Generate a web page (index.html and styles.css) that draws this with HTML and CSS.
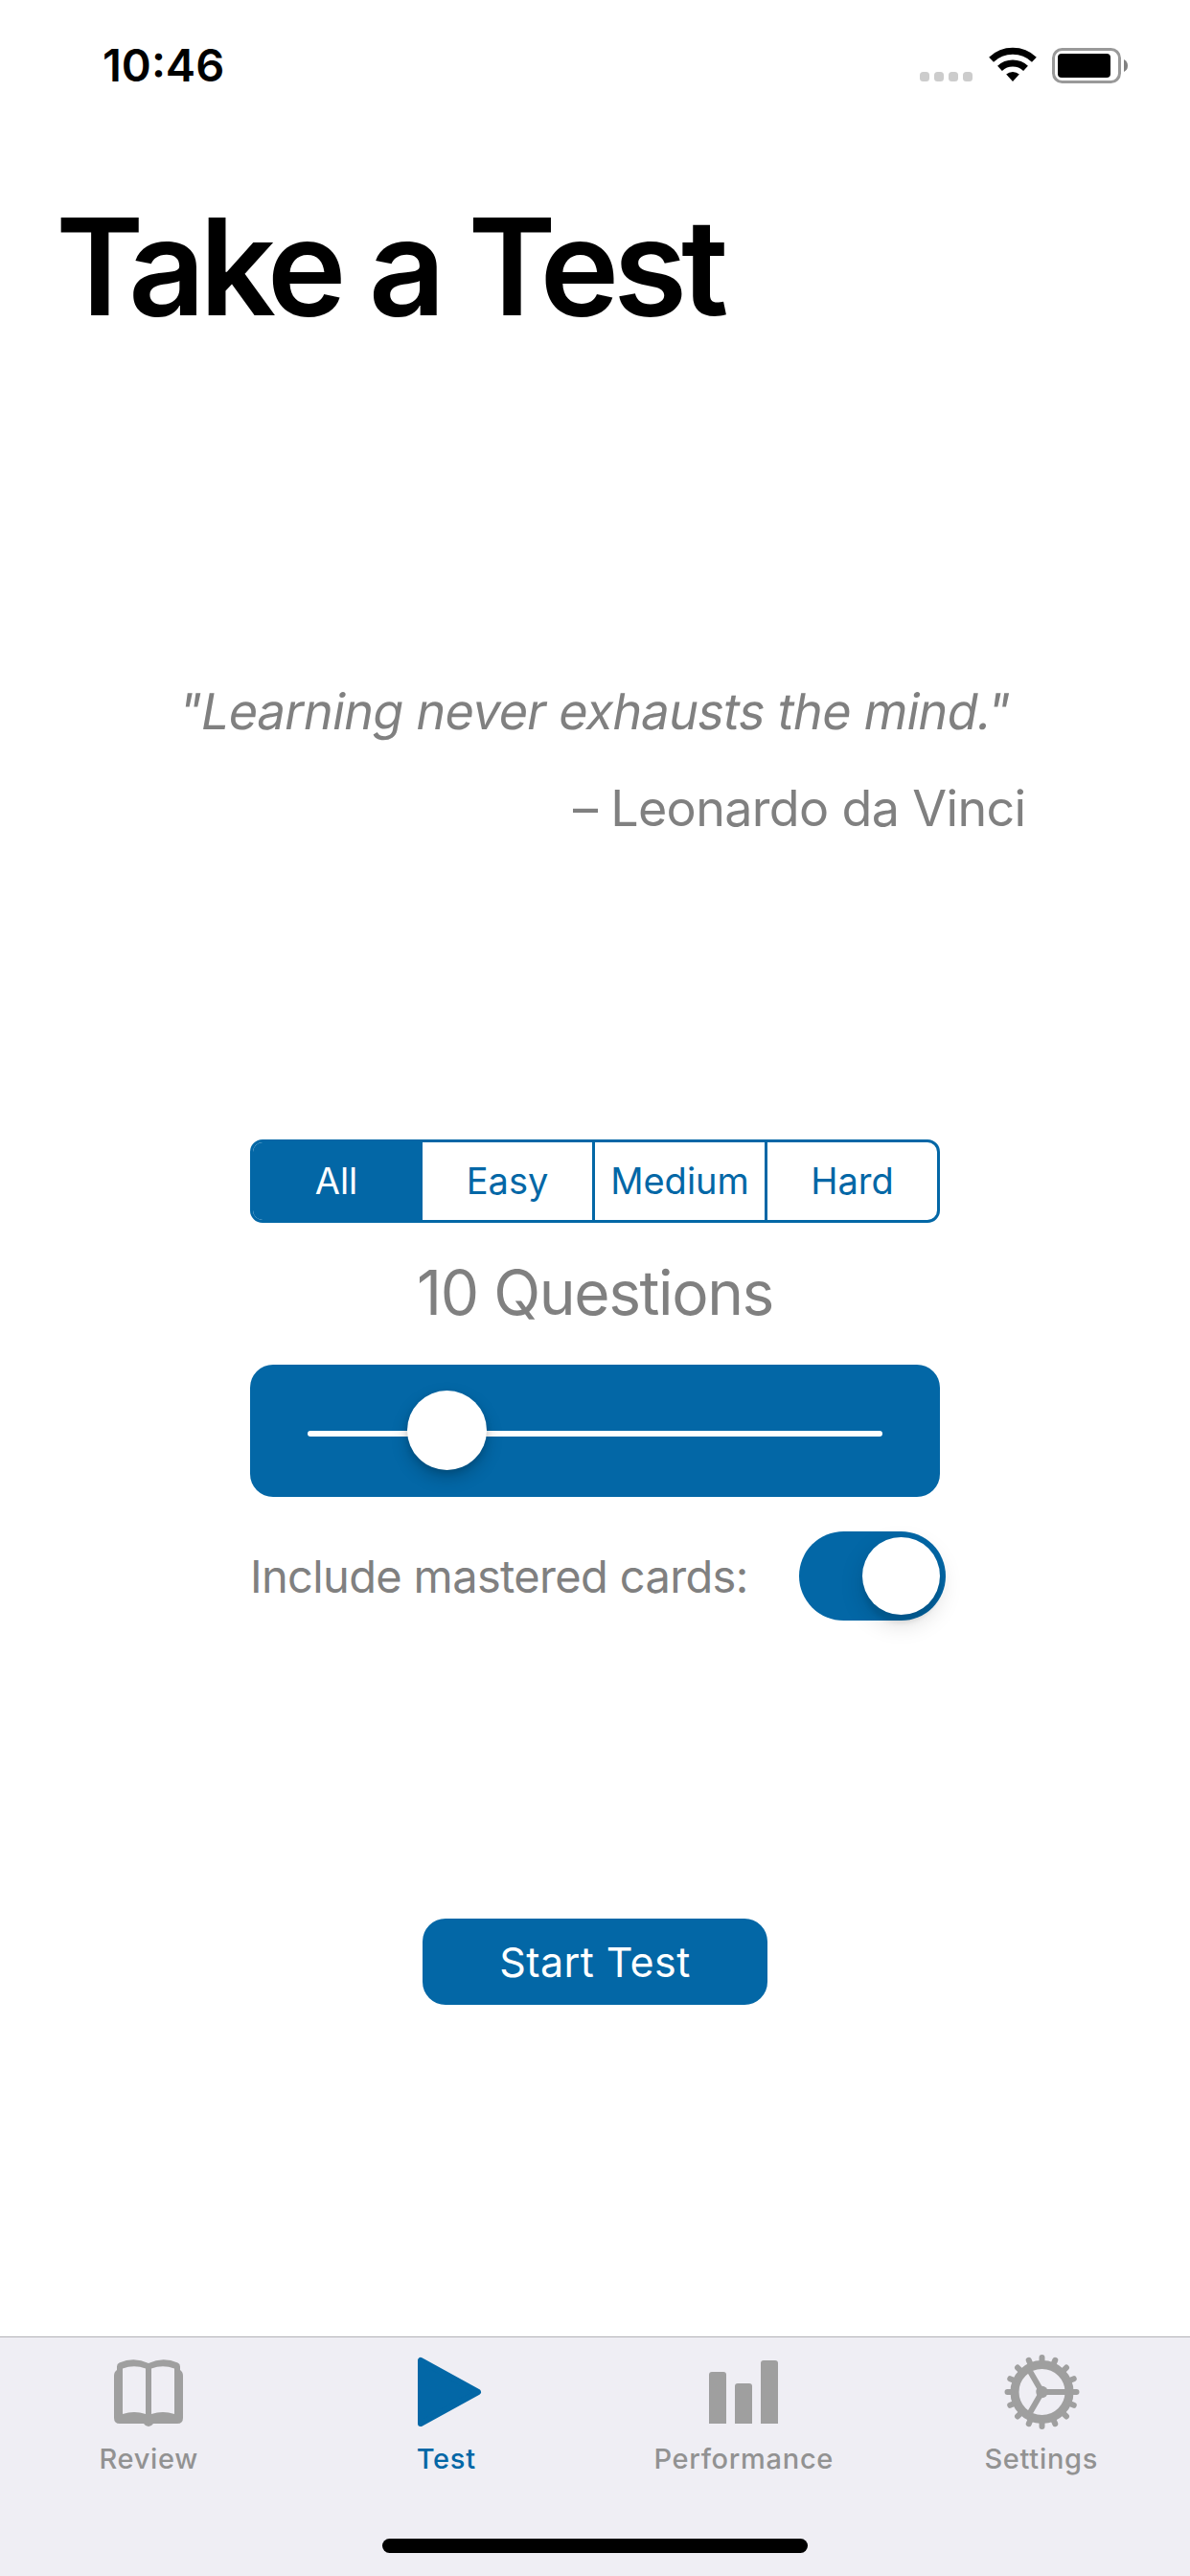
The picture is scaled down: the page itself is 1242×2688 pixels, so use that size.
FILE: index.html
```html
<!DOCTYPE html>
<html lang="en">
<head>
<meta charset="utf-8">
<title>Take a Test</title>
<link rel="stylesheet" href="styles.css">
</head>
<body>
<div class="screen">
  <header class="status-bar">
    <span class="time">10:46</span>
    <div class="status-icons">
      <span class="signal"><i></i><i></i><i></i><i></i></span>
      <svg class="wifi" viewBox="0 0 50 36" width="50" height="36">
        <g fill="none" stroke="#000">
          <path d="M2.6 13.2 A32.5 32.5 0 0 1 47.4 13.2" stroke-width="7"/>
          <path d="M11.5 22.4 A19.6 19.6 0 0 1 38.5 22.4" stroke-width="7"/>
        </g>
        <path d="M18.2 28.6 A10 10 0 0 1 31.8 28.6 L25 36 Z"/>
      </svg>
      <svg class="battery" viewBox="0 0 80 37" width="80" height="37">
        <rect x="1.5" y="1.5" width="69" height="34" rx="9" fill="#fff" stroke="#999" stroke-width="3"/>
        <rect x="6" y="6" width="55" height="25" rx="4"/>
        <path d="M75 12 Q79 14 79 18.500 Q79 23 75 25 Z" fill="#808080"/>
      </svg>
    </div>
  </header>

  <h1 class="title">Take a Test</h1>

  <main class="content">
    <blockquote class="quote">
      <p class="quote-text">"Learning never exhausts the mind."</p>
      <p class="quote-author">– Leonardo da Vinci</p>
    </blockquote>

    <section class="options">
      <div class="segments">
        <span class="segment selected">All</span>
        <span class="segment">Easy</span>
        <span class="segment">Medium</span>
        <span class="segment">Hard</span>
      </div>
      <p class="count">10 Questions</p>
      <div class="slider">
        <div class="track"><span class="thumb"></span></div>
      </div>
      <div class="toggle-row">
        <span class="toggle-label">Include mastered cards:</span>
        <span class="switch"><span class="knob"></span></span>
      </div>
    </section>

    <button class="start" type="button"><span>Start Test</span></button>
  </main>

  <nav class="tabs">
    <a class="tab">
      <svg viewBox="0 0 80 80" width="80" height="80" fill="#9f9f9f">
        <path fill-rule="evenodd" d="M7 16.500 Q7 13.500 9.500 12.500 Q25 6 40 13 Q55 6 70.500 12.500 Q73 13.500 73 16.500 V20 Q76 22 76 26 V70 Q76 76 70 76 H45 Q43 79 40 79 Q37 79 35 76 H10 Q4 76 4 70 V26 Q4 22 7 20 Z M13 18.500 V66 Q25 62 37 66 V18.500 Q25 14 13 18.500 Z M43 18.500 V66 Q55 62 67 66 V18.500 Q55 14 43 18.500 Z"/>
      </svg>
      <span class="tab-label">Review</span>
    </a>
    <a class="tab active">
      <svg viewBox="0 0 80 80" width="80" height="80">
        <path d="M13 10 V76 L73 43 Z" fill="#0367a6" stroke="#0367a6" stroke-width="6" stroke-linejoin="round"/>
      </svg>
      <span class="tab-label">Test</span>
    </a>
    <a class="tab">
      <svg viewBox="0 0 80 80" width="80" height="80" fill="#9f9f9f">
        <path d="M4 76 V25 Q4 22 7 22 H19 Q22 22 22 25 V76 Z"/>
        <path d="M31 76 V37 Q31 34 34 34 H46 Q49 34 49 37 V76 Z"/>
        <path d="M58 76 V13 Q58 10 61 10 H73 Q76 10 76 13 V76 Z"/>
      </svg>
      <span class="tab-label">Performance</span>
    </a>
    <a class="tab">
      <svg viewBox="0 0 80 80" width="80" height="80">
        <g fill="none" stroke="#9f9f9f" transform="translate(40.500 43)">
          <circle r="28.500" stroke-width="9"/>
          <path stroke-width="6" stroke-linecap="round" d="M32 0H36M29.560 12.250L33.260 13.780M22.630 22.630L25.460 25.460M12.250 29.560L13.780 33.260M0 32V36M-12.250 29.560L-13.780 33.260M-22.630 22.630L-25.460 25.460M-29.560 12.250L-33.260 13.780M-32 0H-36M-29.560 -12.250L-33.260 -13.780M-22.630 -22.630L-25.460 -25.460M-12.250 -29.560L-13.780 -33.260M0 -32V-36M12.250 -29.560L13.780 -33.260M22.630 -22.630L25.460 -25.460M29.560 -12.250L33.260 -13.780"/>
          <path stroke-width="6" d="M0 0H26M0 0L-13 22.500M0 0L-13 -22.500"/>
          <circle r="6.200" fill="#9f9f9f" stroke="none"/>
        </g>
      </svg>
      <span class="tab-label">Settings</span>
    </a>
  </nav>
  <div class="home-area"><span class="home-indicator"></span></div>
</div>
</body>
</html>
```
FILE: styles.css
```css
* {
  box-sizing: border-box;
}

body,
h1,
p,
blockquote {
  margin: 0;
}

body {
  background: #fff;
  font-family: Inter, "Liberation Sans", sans-serif;
}

.screen {
  display: flex;
  flex-direction: column;
  width: 1242px;
  height: 2688px;
}

.status-bar {
  display: flex;
  align-items: center;
  justify-content: space-between;
  height: 136px;
  padding: 0 64px 0 107px;
}

.time {
  font-size: 47px;
  font-weight: 600;
  line-height: 60px;
}

.status-icons {
  display: flex;
  align-items: center;
}

.signal {
  display: flex;
  gap: 5px;
  margin: 24px 17px 0 0;
}

.signal i {
  width: 10px;
  height: 10px;
  border-radius: 3.500px;
  background: #ccc;
}

.wifi {
  margin: 0 16px 2px 0;
}

.title {
  margin-top: 58px;
  padding-left: 58px;
  font-size: 140px;
  font-weight: 600;
  letter-spacing: -6.1px;
  line-height: 168px;
  white-space: nowrap;
}

.content {
  display: flex;
  flex: 1;
  flex-direction: column;
  align-items: center;
}

.quote {
  width: 899px;
  margin-top: 341px;
  color: #808080;
  font-size: 52px;
  letter-spacing: -0.65px;
  line-height: 80px;
  white-space: nowrap;
}

/* Slants the upright face so the letters keep their roman shapes */
.quote-text {
  padding-left: 15px;
  transform: skewX(-10deg);
}

.quote-author {
  margin-top: 21px;
  text-align: right;
}

.options {
  width: 720px;
  margin-top: 305px;
}

.segments {
  display: flex;
  height: 87px;
  overflow: hidden;
  border: 3px solid #0367a6;
  border-radius: 13px;
  color: #0367a6;
  font-size: 38px;
  line-height: 81px;
}

.segment {
  width: 180px;
  border-right: 3px solid #0367a6;
  text-align: center;
}

.segment:first-child {
  width: 177px;
}

.segment:last-child {
  border-right: 0;
  width: 177px;
}

.selected {
  background: #0367a6;
  color: #fff;
}

.count {
  margin-top: 32px;
  color: #808080;
  font-size: 64px;
  letter-spacing: -1.4px;
  line-height: 81px;
  text-align: center;
}

.slider {
  height: 138px;
  margin-top: 35px;
  padding: 69px 60px 0;
  border-radius: 24px;
  background: #0367a6;
}

.track {
  position: relative;
  height: 6px;
  border-radius: 3px;
  background: #fff;
}

.thumb {
  position: absolute;
  top: -42px;
  left: 104px;
  width: 83px;
  height: 83px;
  border-radius: 50%;
  background: #fff;
  box-shadow: 0 8px 18px rgba(0, 0, 0, 0.2), 0 3px 6px rgba(0, 0, 0, 0.12);
}

.toggle-row {
  display: flex;
  align-items: center;
  justify-content: space-between;
  width: 726px;
  height: 93px;
  margin-top: 36px;
}

.toggle-label {
  color: #808080;
  font-size: 47px;
  letter-spacing: -0.65px;
  line-height: 93px;
  white-space: nowrap;
}

.switch {
  display: flex;
  justify-content: flex-end;
  width: 153px;
  height: 93px;
  padding: 6px;
  border-radius: 47px;
  background: #0367a6;
}

.knob {
  width: 81px;
  height: 81px;
  border-radius: 50%;
  background: #fff;
  box-shadow: 0 9px 24px rgba(0, 0, 0, 0.15), 0 9px 4px rgba(0, 0, 0, 0.07);
}

.start {
  width: 360px;
  height: 90px;
  margin-top: 311px;
  padding: 0;
  border: 0;
  border-radius: 24px;
  background: #0367a6;
  color: #fff;
  font: 400 43px/90px Inter, "Liberation Sans", sans-serif;
  letter-spacing: 0.4px;
}

.tabs {
  display: flex;
  height: 171px;
  border-top: 1px solid #b2b2b6;
  background: #efeef4;
}

.tab {
  display: flex;
  flex: 1;
  flex-direction: column;
  align-items: center;
  padding-top: 14px;
  color: #929292;
  font-size: 29px;
  font-weight: 500;
  letter-spacing: 0.7px;
}

.tab svg {
  overflow: visible;
}

.tab-label {
  margin-top: 12px;
  line-height: 42px;
}

.active {
  color: #0367a6;
}

.home-area {
  display: flex;
  justify-content: center;
  height: 79px;
  padding-top: 40px;
  background: #efeef4;
}

.home-indicator {
  width: 444px;
  height: 15px;
  border-radius: 8px;
  background: #000;
}
```
